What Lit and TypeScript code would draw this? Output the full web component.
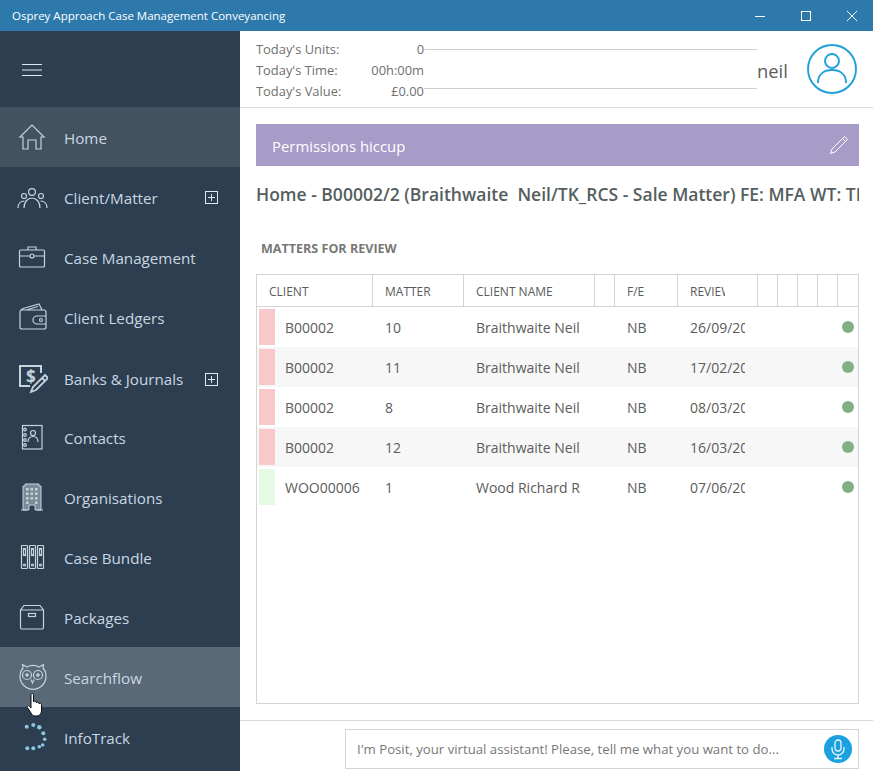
import { LitElement, html, css, svg } from "lit";
import { customElement } from "lit/decorators.js";

const icons: Record<string, unknown> = {
  home: svg`<path d="M4 16 16 4l12 12h-3v12h-5v-9h-8v9H7V16z"/>`,
  group: svg`<circle cx="16" cy="11" r="3.4"/><circle cx="8" cy="15" r="2.5"/><circle cx="25" cy="15" r="2.5"/><path d="M8 27c0-6 3.500-10 8-10s8 4 8 10M2 27c0-4 2.500-7 6.500-7M31 27c0-4-2.500-7-6.500-7"/>`,
  case: svg`<rect x="3.500" y="9" width="25" height="17" rx="1"/><path d="M12 9V6h8v3M3.500 15h10M18.500 15h10"/><circle cx="16" cy="15" r="2"/>`,
  wallet: svg`<path d="M21 15h9v8h-9a4 4 0 0 1 0-8zM30 15v-4a2 2 0 0 0-2-2H6a2 2 0 0 0-2 2v15a2 2 0 0 0 2 2h22a2 2 0 0 0 2-2v-3M4 11c0-2 1-2.500 3-3.500L23 3l3 6M10 9l12-3.500"/><circle cx="25" cy="19" r="1.500"/>`,
  banks: svg`<path stroke-width="2" d="M25 10V3H4v20h10"/><text x="10" y="20" class="dollar">$</text><path stroke-width="1.800" d="M29 12l3 3-12 12-5 2 2-5zM26 15l3 3"/>`,
  contacts: svg`<rect x="6.500" y="4.500" width="19.500" height="23.500"/><circle cx="9" cy="8.500" r="1.300"/><circle cx="9" cy="14" r="1.300"/><circle cx="9" cy="19" r="1.300"/><circle cx="9" cy="24" r="1.300"/><circle cx="17" cy="12" r="2.500"/><path d="M12 21c0-3.500 2-5.500 5-5.500s5 2 5 5.500"/>`,
  org: svg`<path class="solid" d="M7 5h2V3h14v2h2v24h-6v-5h-6v5H7z"/><path d="M5 29h6M21 29h6"/><path class="win" d="M10 7h2.500v2.500H10zM14.500 7H17v2.500h-2.500zM19 7h2.500v2.500H19zM10 11.500h2.500V14H10zM14.500 11.500H17V14h-2.500zM19 11.500h2.500V14H19zM10 16h2.500v2.500H10zM14.500 16H17v2.500h-2.500zM19 16h2.500v2.500H19zM10 20.500h2.500V23H10zM19 20.500h2.500V23H19z"/>`,
  bundle: svg`<rect x="5.500" y="4.500" width="6" height="23" rx=".5"/><rect x="13.500" y="4.500" width="6" height="23" rx=".5"/><rect x="21.500" y="4.500" width="6" height="23" rx=".5"/><rect x="7.500" y="7.500" width="2" height="7"/><rect x="15.500" y="7.500" width="2" height="7"/><rect x="23.500" y="7.500" width="2" height="7"/><circle cx="8.500" cy="24" r="1"/><circle cx="16.500" cy="24" r="1"/><circle cx="24.500" cy="24" r="1"/>`,
  packages: svg`<path d="M4.500 9v17.500a1.500 1.500 0 0 0 1.500 1.500h20a1.500 1.500 0 0 0 1.500-1.500V9L24 4.500H8zM4.500 9h23"/><rect x="12.500" y="12.500" width="7" height="3"/>`,
  owl: svg`<path d="M7 7 6.500 3.500 11 6a13 13 0 0 1 12 0l4.500-2.500L27 7a13 13 0 1 1-20 0z"/><circle cx="11" cy="14" r="4.500"/><circle cx="22" cy="14" r="4.500"/><circle class="fill" cx="11" cy="14" r="1.800"/><circle class="fill" cx="22" cy="14" r="1.800"/><path d="M15 18.500l1.500 3.500 1.500-3.500"/>`,
  info: svg`<g class="dots"><circle cx="10.700" cy="5.700" r="2"/><circle cx="17.300" cy="4" r="2"/><circle cx="23.300" cy="6.300" r="2.200"/><circle cx="27.300" cy="12.300" r="2"/><circle cx="28.700" cy="18.300" r="1.800"/><circle cx="26.700" cy="24" r="1.800"/><circle cx="23.300" cy="25.700" r="1.800"/><circle cx="17.300" cy="27.300" r="2"/><circle cx="11.300" cy="27.300" r="2"/></g>`,
};

const nav = [
  { id: "home", label: "Home", cls: "active" },
  { id: "group", label: "Client/Matter", plus: true },
  { id: "case", label: "Case Management" },
  { id: "wallet", label: "Client Ledgers" },
  { id: "banks", label: "Banks & Journals", plus: true, cls: "low" },
  { id: "contacts", label: "Contacts" },
  { id: "org", label: "Organisations" },
  { id: "bundle", label: "Case Bundle" },
  { id: "packages", label: "Packages" },
  { id: "owl", label: "Searchflow", cls: "hover" },
  { id: "info", label: "InfoTrack" },
];

const cols = ["CLIENT", "MATTER", "CLIENT NAME", "", "F/E", "REVIEW", "", "", "", "", ""];

const rows = [
  ["B00002", "10", "Braithwaite Neil", "NB", "26/09/2020", "pink"],
  ["B00002", "11", "Braithwaite Neil", "NB", "17/02/2020", "pink"],
  ["B00002", "8", "Braithwaite Neil", "NB", "08/03/2020", "pink"],
  ["B00002", "12", "Braithwaite Neil", "NB", "16/03/2020", "pink"],
  ["WOO00006", "1", "Wood Richard R", "NB", "07/06/2020", "mint"],
];

@customElement("app-root")
export class AppRoot extends LitElement {
  static styles = css`
    :host {
      display: block;
      position: relative;
      width: 873px;
      height: 771px;
      overflow: hidden;
      background: #fff;
      font-family: "Open Sans", "Noto Sans", sans-serif;
      color: #555;
    }
    .titlebar {
      height: 31px;
      background: #2d79ab;
      display: flex;
      align-items: center;
      color: #fff;
      font-size: 11.5px;
      padding-left: 12px;
    }
    .titlebar .name { flex: 1; }
    .winbtn { width: 46px; height: 31px; display: flex; align-items: center; justify-content: center; }
    .winbtn:last-child { width: 42px; margin-left: 2px; }
    .winbtn svg { width: 12px; height: 12px; fill: none; stroke: #fff; stroke-width: 1; }
    .body { display: flex; height: 740px; }
    .side { width: 240px; flex: none; background: #2d3e50; color: #c9d7e1; overflow: hidden; }
    .burger { height: 76px; box-sizing: border-box; padding: 1px 0 0 22px; display: flex; align-items: center; }
    .burger svg { width: 20px; height: 12px; stroke: #dfe6ec; stroke-width: 1; }
    .item { height: 60px; display: flex; align-items: center; padding-left: 16px; font-size: 15.2px; box-sizing: border-box; }
    .item.active { background: #435261; }
    .item.hover { background: #596978; }
    .item.low { padding-top: 4px; }
    .item svg.ic { width: 32px; height: 32px; flex: none; fill: none; stroke: #c5d3dd; stroke-width: 1.200; }
    .item .label { margin-left: 16px; flex: 1; white-space: nowrap; padding-top: 2px; }
    .item.low .label { padding-top: 0; }
    .plus { width: 13px; height: 13px; margin-right: 22px; flex: none; fill: none; stroke: #dfe6ec; stroke-width: 1; }
    .ic .dollar { font: bold 17px "Open Sans", sans-serif; fill: #c5d3dd; stroke: none; }
    .ic .solid { fill: #7d8b98; stroke: #c5d3dd; stroke-width: 1; }
    .ic .win { fill: #c5d3dd; stroke: none; }
    .ic .fill { fill: #c5d3dd; stroke: none; }
    .ic .dots { fill: #8ec6e0; stroke: none; }
    .main { flex: 1; min-width: 0; display: flex; flex-direction: column; }
    .head { height: 76px; border-bottom: 1px solid #d9d9d9; display: flex; padding-left: 16px; flex: none; }
    .stats { width: 168px; flex: none; padding-top: 7px; font-size: 12.900px; color: #707070; }
    .stat { height: 21px; display: flex; justify-content: space-between; align-items: center; white-space: nowrap; }
    .lines { width: 333px; flex: none; display: flex; flex-direction: column; justify-content: space-between; padding: 18px 0; height: 40px; box-sizing: content-box; }
    .lines div { height: 1px; background: #cfcfcf; }
    .user { flex: 1; display: flex; align-items: center; font-size: 18.4px; color: #5c5c5c; }
    .user span { flex: 1; padding-top: 3px; }
    .user svg { width: 50px; height: 50px; margin-right: 16px; fill: none; stroke: #1e9fd8; stroke-width: 1.900; }
    .content { flex: 1; padding: 16px 14px 16px 16px; display: flex; flex-direction: column; min-height: 0; }
    .banner { height: 42px; background: #a79bc8; color: #fff; display: flex; align-items: center; justify-content: space-between; padding: 0 10px 0 16px; font-size: 14.900px; flex: none; }
    .banner span { padding-top: 2px; }
    .banner svg { width: 20px; height: 20px; fill: none; stroke: #fff; stroke-width: 1; }
    .title { margin-top: 16px; font-size: 17.500px; font-weight: 600; color: #555e5e; white-space: pre; overflow: hidden; line-height: 24px; flex: none; }
    .section { margin: 33px 0 0 5px; height: 20px; line-height: 20px; font-size: 12.550px; font-weight: 700; color: #777; flex: none; }
    .table { margin-top: 15px; flex: 1; border: 1px solid #d4d4d4; min-height: 0; overflow: hidden; }
    .grid { display: grid; grid-template-columns: 116px 91px 131px 20px 63px 80px 20px 20px 20px 20px 20px; }
    .th { height: 32px; box-sizing: border-box; border-bottom: 1px solid #d4d4d4; border-right: 1px solid #d4d4d4; font-size: 12px; color: #5a5a5a; padding-top: 1px; display: flex; align-items: center; white-space: nowrap; overflow: hidden; min-width: 0; }
    .th span { overflow: hidden; margin: 0 32px 0 12px; }
    .th span:empty { margin: 0; }
    .th:nth-child(11) { border-right: none; }
    .tr { display: contents; }
    .td { height: 40px; display: flex; align-items: center; font-size: 14px; color: #5c5c5c; padding-left: 12px; white-space: nowrap; overflow: hidden; box-sizing: border-box; min-width: 0; }
    .tr.alt .td { background: #f7f7f7; }
    .td.first { padding-left: 2px; }
    .tag { width: 16px; height: 36px; margin-right: 10px; flex: none; }
    .tag.pink { background: #f9c8cb; }
    .tag.mint { background: #e5fae5; }
    .td.date { grid-column: span 2; }
    .td.date span { overflow: hidden; width: 55px; }
    .td.dotcell { grid-column: span 4; justify-content: flex-end; padding-right: 4px; }
    .td.gap { padding: 0; }
    .dot { width: 12px; height: 12px; border-radius: 50%; background: #82b085; }
    .foot { height: 51px; flex: none; border-top: 1px solid #d9d9d9; display: flex; justify-content: flex-end; padding: 8px 14px 0 0; box-sizing: border-box; }
    .ask { width: 514px; height: 40px; box-sizing: border-box; border: 1px solid #d4d4d4; display: flex; align-items: center; justify-content: space-between; padding: 0 6px 0 11px; font-size: 13.200px; color: #777; }
    .mic { width: 28px; height: 28px; border-radius: 50%; background: #1ba0e0; display: flex; align-items: center; justify-content: center; }
    .mic svg { width: 18px; height: 22px; fill: none; stroke: #e8f6fc; stroke-width: 1.300; }
    .cursor { position: absolute; left: 26px; top: 693px; width: 18px; height: 24px; }
  `;

  render() {
    return html`
      <div class="titlebar">
        <span class="name">Osprey Approach Case Management Conveyancing</span>
        <div class="winbtn"><svg viewBox="0 0 12 12"><path d="M1 6.500h10"/></svg></div>
        <div class="winbtn"><svg viewBox="0 0 12 12"><rect x="1.500" y="1.500" width="9" height="9"/></svg></div>
        <div class="winbtn"><svg viewBox="0 0 12 12"><path d="M1 1l10 10M11 1 1 11"/></svg></div>
      </div>
      <div class="body">
        <nav class="side">
          <div class="burger"><svg viewBox="0 0 20 12"><path d="M0 .5h20M0 6h20M0 11.500h20"/></svg></div>
          ${nav.map(
            (n) => html`<div class="item ${n.cls ?? ""}">
              <svg class="ic" viewBox="0 0 32 32">${icons[n.id]}</svg>
              <span class="label">${n.label}</span>
              ${n.plus
                ? html`<svg class="plus" viewBox="0 0 13 13"><rect x=".5" y=".5" width="12" height="12"/><path d="M6.500 3v7M3 6.500h7"/></svg>`
                : ""}
            </div>`
          )}
        </nav>
        <main class="main">
          <header class="head">
            <div class="stats">
              <div class="stat"><span>Today's Units:</span><span>0</span></div>
              <div class="stat"><span>Today's Time:</span><span>00h:00m</span></div>
              <div class="stat"><span>Today's Value:</span><span>£0.00</span></div>
            </div>
            <div class="lines"><div></div><div></div></div>
            <div class="user">
              <span>neil</span>
              <svg viewBox="0 0 50 50"><circle cx="25" cy="25" r="24"/><circle cx="25" cy="17" r="7"/><path d="M11 39c0-9 6-13 14-13s14 4 14 13"/></svg>
            </div>
          </header>
          <div class="content">
            <div class="banner">
              <span>Permissions hiccup</span>
              <svg viewBox="0 0 20 20"><path d="M15.500 1.500l3 3L6 17l-4.500 1.500L3 14zM13.500 3.500l3 3"/></svg>
            </div>
            <div class="title">Home - B00002/2 (Braithwaite  Neil/TK_RCS - Sale Matter) FE: MFA WT: TK_RCS</div>
            <div class="section">MATTERS FOR REVIEW</div>
            <div class="table">
              <div class="grid">
                ${cols.map((c) => html`<div class="th"><span>${c}</span></div>`)}
                ${rows.map(
                  (r, i) => html`<div class="tr ${i % 2 ? "alt" : ""}">
                    <div class="td first"><div class="tag ${r[5]}"></div>${r[0]}</div>
                    <div class="td">${r[1]}</div>
                    <div class="td">${r[2]}</div>
                    <div class="td gap"></div>
                    <div class="td">${r[3]}</div>
                    <div class="td date"><span>${r[4]}</span></div>
                    <div class="td dotcell"><div class="dot"></div></div>
                  </div>`
                )}
              </div>
            </div>
          </div>
          <footer class="foot">
            <div class="ask">
              <span>I'm Posit, your virtual assistant! Please, tell me what you want to do...</span>
              <div class="mic"><svg viewBox="0 0 18 22"><rect x="6" y="2" width="6" height="11" rx="3"/><path d="M3 9v2a6 6 0 0 0 12 0V9M9 17v3M5 20.500h8"/></svg></div>
            </div>
          </footer>
        </main>
      </div>
      <svg class="cursor" viewBox="0 0 18 24"><path fill="#fff" stroke="#111" stroke-width="1" d="M5 1.500c0-1.300 2.500-1.300 2.500 0V9c.3-1.500 2.500-1.500 2.800 0v1c.3-1.300 2.400-1.300 2.700.2v.8c.4-1.200 2.500-1 2.500.6V17c0 3-1.500 6-4.500 6H9c-2 0-3-1-4-3L1.500 14.500c-.8-1.500 1-2.500 2-1.500L5 15z"/></svg>
    `;
  }
}
